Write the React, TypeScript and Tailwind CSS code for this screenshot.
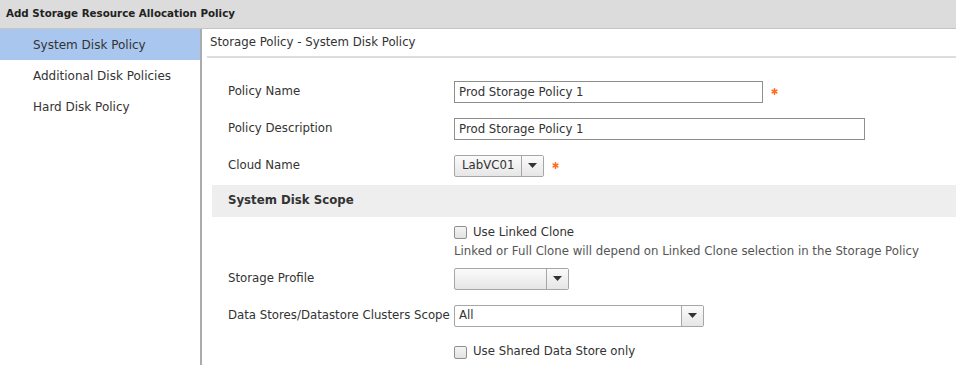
import { Asterisk } from "lucide-react";

function Caret() {
  return (
    <svg width="9" height="5" viewBox="0 0 9 5" className="text-[#333]">
      <path d="M0 0h9L4.5 5z" fill="currentColor" />
    </svg>
  );
}

function Required() {
  return <Asterisk className="ml-[6px] size-[11px] text-[#ff6a1a]" strokeWidth={3.5} />;
}

function Select({ value, width, text }: { value: string; width: string; text?: boolean }) {
  return (
    <div
      className={`flex h-[22px] ${width} items-stretch rounded-[2px] border border-[#a6a6a6] ${
        text ? "bg-white" : "bg-gradient-to-b from-[#fbfbfb] to-[#e6e6e6]"
      }`}
    >
      <span className={`flex flex-1 items-center text-[#333] ${text ? "px-[4px]" : "px-[7px]"}`}>{value}</span>
      <span className="flex w-[22px] items-center justify-center border-l border-[#a6a6a6] bg-gradient-to-b from-[#fbfbfb] to-[#e6e6e6]">
        <Caret />
      </span>
    </div>
  );
}

function Checkbox({ label }: { label: string }) {
  return (
    <label className="flex items-center gap-[6px] text-[#333]">
      <span className="size-[13px] rounded-[2px] border border-[#8f8f8f] bg-gradient-to-b from-[#f4f4f4] to-[#e2e2e2]" />
      {label}
    </label>
  );
}

function Row({ label, children }: { label: string; children: React.ReactNode }) {
  return (
    <div className="flex h-[37px] items-center">
      <span className="w-[242px] pl-[16px] text-[#333]">{label}</span>
      <div className="flex items-center">{children}</div>
    </div>
  );
}

const navItems = ["System Disk Policy", "Additional Disk Policies", "Hard Disk Policy"];

export default function App() {
  return (
    <div className="flex h-[365px] w-[956px] flex-col overflow-hidden bg-white font-['DejaVu_Sans',sans-serif] text-[11.75px]">
      <div className="flex h-[29px] shrink-0 items-center border-b border-[#c4c4c4] bg-[#dcdcdc] pl-[6px] text-[10.3px] font-bold text-[#222]">
        Add Storage Resource Allocation Policy
      </div>
      <div className="flex flex-1">
        <nav className="w-[202px] shrink-0 border-r-2 border-[#ababab]">
          {navItems.map((item, i) => (
            <div
              key={item}
              className={`flex h-[31px] items-center pl-[33px] text-[12px] text-[#333] ${
                i === 0 ? "bg-[#a9c6ee]" : ""
              }`}
            >
              {item}
            </div>
          ))}
        </nav>
        <main className="flex-1 pl-[5px]">
          <div className="flex h-[29px] items-center border-b-2 border-[#dddddd] pl-[3px] pt-[1px] text-[#333]">
            Storage Policy - System Disk Policy
          </div>
          <div className="pl-[5px] pt-[15px]">
            <Row label="Policy Name">
              <input
                readOnly
                value="Prod Storage Policy 1"
                className="h-[22px] w-[309px] border border-[#8e8e8e] px-[4px] text-[#333] outline-none"
              />
              <Required />
            </Row>
            <Row label="Policy Description">
              <input
                readOnly
                value="Prod Storage Policy 1"
                className="h-[22px] w-[411px] border border-[#8e8e8e] px-[4px] text-[#333] outline-none"
              />
            </Row>
            <Row label="Cloud Name">
              <Select value="LabVC01" width="w-[90px]" />
              <Required />
            </Row>
            <div className="mt-[1px] flex h-[32px] items-center bg-[#eeeeee] pl-[16px] font-bold text-[#333]">
              System Disk Scope
            </div>
            <div className="flex flex-col gap-[1px] pl-[242px] pt-[7px]">
              <Checkbox label="Use Linked Clone" />
              <span className="text-[#555]">
                Linked or Full Clone will depend on Linked Clone selection in the Storage Policy
              </span>
            </div>
            <Row label="Storage Profile">
              <Select value="" width="w-[115px]" />
            </Row>
            <Row label="Data Stores/Datastore Clusters Scope">
              <Select value="All" width="w-[250px]" text />
            </Row>
            <div className="pl-[242px] pt-[9px]">
              <Checkbox label="Use Shared Data Store only" />
            </div>
          </div>
        </main>
      </div>
    </div>
  );
}
